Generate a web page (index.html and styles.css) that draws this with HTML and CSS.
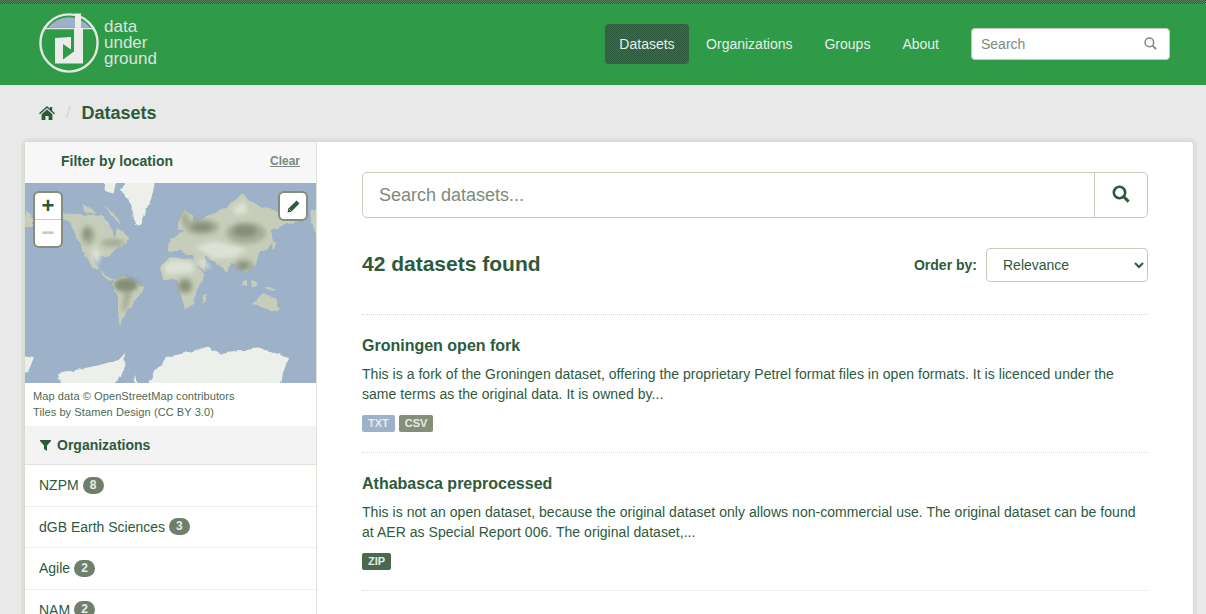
FILE: index.html
```html
<!DOCTYPE html>
<html lang="en">
<head>
	<meta charset="UTF-8">
	<title>Datasets - Data Underground</title>
	<link rel="stylesheet" href="styles.css">
</head>
<body>
<div class="page">
	<div class="topStrip"></div>
	<header class="masthead">
		<a class="logo" href="#">
			<svg class="logoMark" width="62" height="62" viewBox="0 0 62 62">
				<circle cx="31" cy="31" r="28.6" fill="#2f9a48" stroke="#e4e8e4" stroke-width="2.4"/>
				<path d="M10 15.5 A26.5 26.5 0 0 1 52 15.5 Z" fill="#9db1c9"/>
				<path d="M6 16.5 H56" stroke="#e4e8e4" stroke-width="1.4"/>
				<path d="M37 1.5 H43 V16 H45 V51.5 H17 V26 L33 25 V37.5 L25 32 V47.5 L36 39.5 V16 H37 Z" fill="#e9ece9"/>
			</svg>
			<span class="logoText">data<br>under<br>ground</span>
		</a>
		<nav class="mainNav">
			<a class="navItem active" href="#">Datasets</a>
			<a class="navItem" href="#">Organizations</a>
			<a class="navItem" href="#">Groups</a>
			<a class="navItem" href="#">About</a>
		</nav>
		<form class="siteSearch">
			<input type="text" placeholder="Search">
			<svg width="13" height="13" viewBox="0 0 14 14"><circle cx="5.8" cy="5.8" r="4.6" fill="none" stroke="#7c8a80" stroke-width="1.6"/><path d="M9.2 9.2 L13 13" stroke="#7c8a80" stroke-width="2"/></svg>
		</form>
	</header>

	<div class="crumbs">
		<svg class="homeIcon" width="16" height="14" viewBox="0 0 16 14"><path d="M8 0 L11 2.7 V1 H13.2 V4.7 L16 7.2 L15 8.2 L8 2 L1 8.2 L0 7.2 Z M2.6 8.2 L8 3.4 L13.4 8.2 V14 H9.6 V10 H6.4 V14 H2.6 Z" fill="#2d5a3c"/></svg>
		<span class="crumbSep">/</span>
		<span class="crumbCurrent">Datasets</span>
	</div>

	<div class="wrapper">
		<aside class="sidebar">
			<div class="filterHead">
				<span class="filterTitle">Filter by location</span>
				<a class="clearLink" href="#">Clear</a>
			</div>
			<div class="mapBox">
				<svg class="worldMap" width="292" height="200" viewBox="0 0 292 200">
					<defs>
						<filter id="rough" x="-5%" y="-5%" width="110%" height="110%" color-interpolation-filters="sRGB">
							<feTurbulence type="fractalNoise" baseFrequency="0.14" numOctaves="2" seed="4" result="noise"/>
							<feDisplacementMap in="SourceGraphic" in2="noise" scale="4" xChannelSelector="R" yChannelSelector="G"/>
						</filter>
						<filter id="soft" x="-30%" y="-30%" width="160%" height="160%">
							<feGaussianBlur stdDeviation="2"/>
						</filter>
					</defs>
					<rect width="292" height="200" fill="#9db1c9"/>
					<g fill="#c6cdba" filter="url(#rough)">
						<path d="M0 28 L8 36 V44 H0 Z"/>
						<path d="M285 28 L292 27 V52 L287 44 Z"/>
						<path d="M37 30 L52 31 L66 32 L78 33 L84 40 L87 50 L90 55 L92 46 L98 48 L103 56 L100 62 L92 66 L86 72 L80 75 L73 71 L68 74 L70 80 L75 86 L72 87 L65 80 L58 68 L52 55 L48 45 L42 38 L37 36 Z"/>
						<path d="M75 87 L82 92 L88 97 L85 98 L78 93 Z"/>
						<path d="M88 97 L98 93 L110 100 L119 105 L108 121 L100 130 L95 144 L93 130 L93 114 L88 104 Z"/>
						<path d="M135 84 L145 74 L168 76 L176 89 L180 92 L172 107 L169 121 L160 126 L155 109 L152 97 L138 96 Z"/>
						<path d="M153 37 L160 28 L168 32 L167 42 L183 33 L203 23 L217 11 L225 17 L237 25 L253 28 L272 38 L257 43 L247 48 L247 60 L242 67 L233 70 L230 82 L220 90 L215 82 L205 80 L202 90 L195 83 L180 72 L180 88 L170 82 L168 72 L163 72 L157 68 L147 68 L142 68 L145 57 L153 52 L160 47 L153 47 Z"/>
						<path d="M227 121 L238 110 L252 116 L254 129 L238 125 Z"/>
						<path d="M178 112 L181 111 L179 120 L177 120 Z"/>
						<path d="M218 98 L222 97 L222 103 L218 102 Z M226 97 L232 99 L230 104 L226 102 Z M240 104 L250 106 L249 108 L241 106 Z"/>
						<path d="M248 57 L251 60 L249 66 L247 64 Z"/>
						<path d="M57 21 L68 27 L72 31 L60 29 Z M80 22 L93 36 L96 42 L86 32 Z"/>
					</g>
					<g fill="#dde2d6" filter="url(#soft)">
						<path d="M138 84 L146 77 L167 79 L170 89 L142 92 Z"/>
						<path d="M172 78 L178 76 L186 85 L180 85 Z"/>
						<path d="M170 64 L190 58 L222 66 L210 74 L190 76 Z"/>
						<path d="M68 62 L76 70 L73 82 L67 74 Z"/>
						<path d="M208 24 L220 18 L222 30 L210 32 Z"/>
					</g>
					<g fill="#a6ae99" filter="url(#soft)">
						<ellipse cx="177" cy="44" rx="17" ry="8"/>
						<ellipse cx="221" cy="50" rx="20" ry="11"/>
						<ellipse cx="219" cy="82" rx="10" ry="6"/>
						<ellipse cx="160" cy="36" rx="4" ry="7"/>
						<ellipse cx="63" cy="52" rx="7" ry="10"/>
						<ellipse cx="88" cy="60" rx="12" ry="4"/>
						<ellipse cx="160" cy="103" rx="8" ry="8"/>
						<path d="M99 108 L107 108 L101 128 L97 128 Z"/>
					</g>
					<g fill="#858e78" filter="url(#soft)">
						<ellipse cx="177" cy="44" rx="11" ry="4"/>
						<ellipse cx="220" cy="48" rx="12" ry="6"/>
						<ellipse cx="218" cy="83" rx="5" ry="3"/>
						<ellipse cx="62" cy="51" rx="3" ry="5"/>
						<ellipse cx="101" cy="102" rx="12" ry="7"/>
						<ellipse cx="160" cy="103" rx="5" ry="5"/>
					</g>
					<g fill="#edf0ea" filter="url(#rough)">
						<path d="M95 7 L103 -4 H130 L128 10 L122 25 L115 42 L110 43 L108 30 L103 15 Z"/>
						<path d="M122 206 L130 188 L142 174 L160 170 L182 164 L195 171 L215 168 L235 165 L263 174 L258 190 L255 206 Z"/>
						<path d="M33 191 L65 184 L94 177 L100 170 L99 187 L86 206 L38 206 Z"/>
						<path d="M-4 172 L9 174 L3 190 L-4 192 Z"/>
						<path d="M108 206 L111 192 L114 206 Z"/>
						<path d="M78 -4 H92 L88 12 L80 8 Z"/>
					</g>
				</svg>
				<div class="zoomBox">
					<a class="zoomBtn zoomIn" href="#">+</a>
					<a class="zoomBtn zoomOut" href="#">&minus;</a>
				</div>
				<a class="drawBtn" href="#">
					<svg width="13" height="13" viewBox="0 0 13 13"><path d="M9.6 .6 L12.4 3.4 L4.2 11.8 L.6 12.4 L1.2 8.8 Z" fill="#2d5a3c"/><path d="M2.4 9.4 L3.6 10.6" stroke="#fff" stroke-width="1"/></svg>
				</a>
			</div>
			<div class="attribution">
				Map data &copy; OpenStreetMap contributors<br>
				Tiles by Stamen Design (CC BY 3.0)
			</div>
			<h2 class="facetHead">
				<svg width="11" height="11" viewBox="0 0 11 11"><path d="M0 0 H11 V1 L7 5.5 V11 L4 9 V5.5 L0 1 Z" fill="#2d5a3c"/></svg>
				Organizations
			</h2>
			<ul class="facetList">
				<li class="facetItem">NZPM <span class="countBadge">8</span></li>
				<li class="facetItem">dGB Earth Sciences <span class="countBadge">3</span></li>
				<li class="facetItem">Agile <span class="countBadge">2</span></li>
				<li class="facetItem">NAM <span class="countBadge">2</span></li>
			</ul>
		</aside>

		<main class="primary">
			<form class="datasetSearch">
				<input type="text" placeholder="Search datasets...">
				<button type="button">
					<svg width="18" height="18" viewBox="0 0 18 18"><circle cx="7.5" cy="7.5" r="5.7" fill="none" stroke="#2d5a3c" stroke-width="2.6"/><path d="M11.8 11.8 L16.6 16.6" stroke="#2d5a3c" stroke-width="3"/></svg>
				</button>
			</form>
			<div class="resultHead">
				<h1 class="resultCount">42 datasets found</h1>
				<label class="orderBy">Order by:
					<select>
						<option>Relevance</option>
					</select>
				</label>
			</div>
			<ul class="datasetList">
				<li class="datasetItem">
					<h3 class="datasetTitle">Groningen open fork</h3>
					<p class="datasetDesc">This is a fork of the Groningen dataset, offering the proprietary Petrel format files in open formats. It is licenced under the same terms as the original data. It is owned by...</p>
					<div class="formats">
						<span class="formatTag txt">TXT</span>
						<span class="formatTag csv">CSV</span>
					</div>
				</li>
				<li class="datasetItem">
					<h3 class="datasetTitle">Athabasca preprocessed</h3>
					<p class="datasetDesc">This is not an open dataset, because the original dataset only allows non-commercial use. The original dataset can be found at AER as Special Report 006. The original dataset,...</p>
					<div class="formats">
						<span class="formatTag zip">ZIP</span>
					</div>
				</li>
			</ul>
		</main>
	</div>
</div>
</body>
</html>
```

FILE: styles.css
```css
html, body
{
	margin: 0;
	padding: 0;
}

body
{
	font-family: "Liberation Sans", Arial, sans-serif;
	font-size: 14px;
	line-height: 20px;
	color: #2d5a3c;
	background: #e9e9e9;
}

a
{
	color: inherit;
	text-decoration: none;
}

.page
{
	height: 100vh;
	overflow: hidden;
}

.topStrip
{
	height: 4px;
	background: repeating-conic-gradient(#2d5a3c 0 25%, #5e8c68 0 50%) 0 0 / 2px 2px;
}

.masthead
{
	display: flex;
	align-items: center;
	height: 81px;
	padding: 0 36px 0 38px;
	background: #2f9a48;
}

.logo
{
	display: flex;
	align-items: center;
	gap: 4px;
	margin-right: auto;
	margin-top: -4px;
}

.logoText
{
	font-size: 17px;
	line-height: 16px;
	color: #dde3dd;
}

.mainNav
{
	display: flex;
	gap: 2px;
	margin-right: 17px;
	margin-top: -2px;
}

.navItem
{
	padding: 10px 15px;
	color: #e6efe8;
	border-radius: 4px;
}

.navItem.active
{
	padding: 10px 14.5px;
	background: repeating-conic-gradient(#2d5a3c 0 25%, #3f6b4a 0 50%) 0 0 / 2px 2px;
}

.siteSearch
{
	display: flex;
	align-items: center;
	width: 199px;
	height: 32px;
	margin-top: -2px;
	box-sizing: border-box;
	padding: 0 12px 0 9px;
	background: #fff;
	border: 1px solid #c6cdba;
	border-radius: 4px;
}

.siteSearch input
{
	flex: 1;
	min-width: 0;
	border: 0;
	outline: 0;
	padding: 0;
	font: inherit;
}

.siteSearch input::placeholder
{
	color: #7c8a80;
}

.crumbs
{
	display: flex;
	align-items: center;
	height: 56px;
	padding-left: 39px;
}

.crumbSep
{
	margin: 0 11px;
	color: #cfd6cf;
	font-size: 16px;
}

.crumbCurrent
{
	font-size: 18px;
	font-weight: bold;
}

.wrapper
{
	display: flex;
	width: 1170px;
	margin-left: 24px;
	box-sizing: border-box;
	background: #fff;
	border: 1px solid #d5dcd2;
	border-radius: 4px;
	box-shadow: 0 0 0 3px #dce2da;
	min-height: 700px;
}

.sidebar
{
	flex: none;
	width: 291px;
	overflow: hidden;
	border-right: 1px solid #dfe4da;
}

.filterHead
{
	display: flex;
	justify-content: space-between;
	align-items: center;
	height: 41px;
	padding: 0 16px 4px 36px;
	box-sizing: border-box;
	background: #f7f7f7;
}

.filterTitle
{
	font-weight: bold;
}

.clearLink
{
	font-size: 12px;
	font-weight: bold;
	color: #7c8a80;
	text-decoration: underline;
}

.mapBox
{
	position: relative;
	height: 200px;
}

.worldMap
{
	display: block;
}

.zoomBox
{
	position: absolute;
	top: 10px;
	left: 10px;
	width: 26px;
	background: #fff;
	border-radius: 4px;
	box-shadow: 0 0 0 2px #858e78;
}

.zoomBtn
{
	display: block;
	height: 26px;
	font-size: 22px;
	font-weight: bold;
	line-height: 26px;
	text-align: center;
}

.zoomIn
{
	border-bottom: 1px solid #c6cdba;
}

.zoomOut
{
	color: #c6cdba;
}

.drawBtn
{
	position: absolute;
	top: 10px;
	right: 10px;
	display: flex;
	align-items: center;
	justify-content: center;
	width: 26px;
	height: 26px;
	background: #fff;
	border-radius: 4px;
	box-shadow: 0 0 0 2px #858e78;
}

.attribution
{
	height: 43px;
	padding: 5px 0 0 8px;
	box-sizing: border-box;
	font-size: 11px;
	line-height: 16px;
	letter-spacing: 0.09px;
	color: #4a6a55;
}

.facetHead
{
	display: flex;
	align-items: center;
	gap: 6px;
	height: 38px;
	margin: 0;
	padding-left: 15px;
	font-size: 14px;
	font-weight: bold;
	background: #f3f3f3;
	border-bottom: 1px solid #dfe4da;
}

.facetList
{
	margin: 0;
	padding: 0;
	list-style: none;
}

.facetItem
{
	display: flex;
	align-items: center;
	gap: 4px;
	height: 41.5px;
	padding-left: 14px;
	box-sizing: border-box;
	border-bottom: 1px dotted #dfe4da;
}

.countBadge
{
	display: inline-block;
	min-width: 7px;
	padding: 0 7px;
	font-size: 12px;
	font-weight: bold;
	line-height: 17px;
	color: #e9ece9;
	background: #6f7f6c;
	border-radius: 9px;
}

.primary
{
	flex: 1;
	padding: 30px 45px 0;
}

.datasetSearch
{
	display: flex;
	height: 46px;
	box-sizing: border-box;
	border: 1px solid #c6cdba;
	border-radius: 5px;
}

.datasetSearch input
{
	flex: 1;
	min-width: 0;
	border: 0;
	outline: 0;
	padding: 0 16px;
	font-family: inherit;
	font-size: 18px;
	background: transparent;
}

.datasetSearch input::placeholder
{
	color: #7c8a80;
}

.datasetSearch button
{
	width: 53px;
	padding: 0;
	border: 0;
	border-left: 1px solid #c6cdba;
	background: transparent;
}

.resultHead
{
	display: flex;
	justify-content: space-between;
	align-items: center;
	height: 34px;
	margin-top: 30px;
	padding-bottom: 32px;
	border-bottom: 1px dotted #d5dad0;
}

.resultCount
{
	margin: -2px 0 0;
	font-size: 21px;
	font-weight: bold;
}

.orderBy
{
	display: flex;
	align-items: center;
	gap: 9px;
	font-weight: bold;
}

.orderBy select
{
	width: 162px;
	height: 34px;
	padding: 0 12px;
	font-family: inherit;
	font-size: 14px;
	color: #2d5a3c;
	background: #fff;
	border: 1px solid #c6cdba;
	border-radius: 4px;
}

.datasetList
{
	margin: 0;
	padding: 0;
	list-style: none;
}

.datasetItem
{
	height: 138px;
	box-sizing: border-box;
	padding-top: 20px;
	border-bottom: 1px dotted #d5dad0;
}

.datasetTitle
{
	margin: 0 0 8px;
	font-size: 16px;
	line-height: 21px;
	font-weight: bold;
}

.datasetDesc
{
	margin: 0 0 11px;
	letter-spacing: 0.04px;
}

.formats
{
	display: flex;
	gap: 4px;
}

.formatTag
{
	padding: 0 6px;
	font-size: 11px;
	font-weight: bold;
	line-height: 17px;
	color: #e6ebe6;
	border-radius: 2px;
}

.txt
{
	background: #9db1c9;
}

.csv
{
	background: #858e78;
}

.zip
{
	background: #476a50;
}
```
